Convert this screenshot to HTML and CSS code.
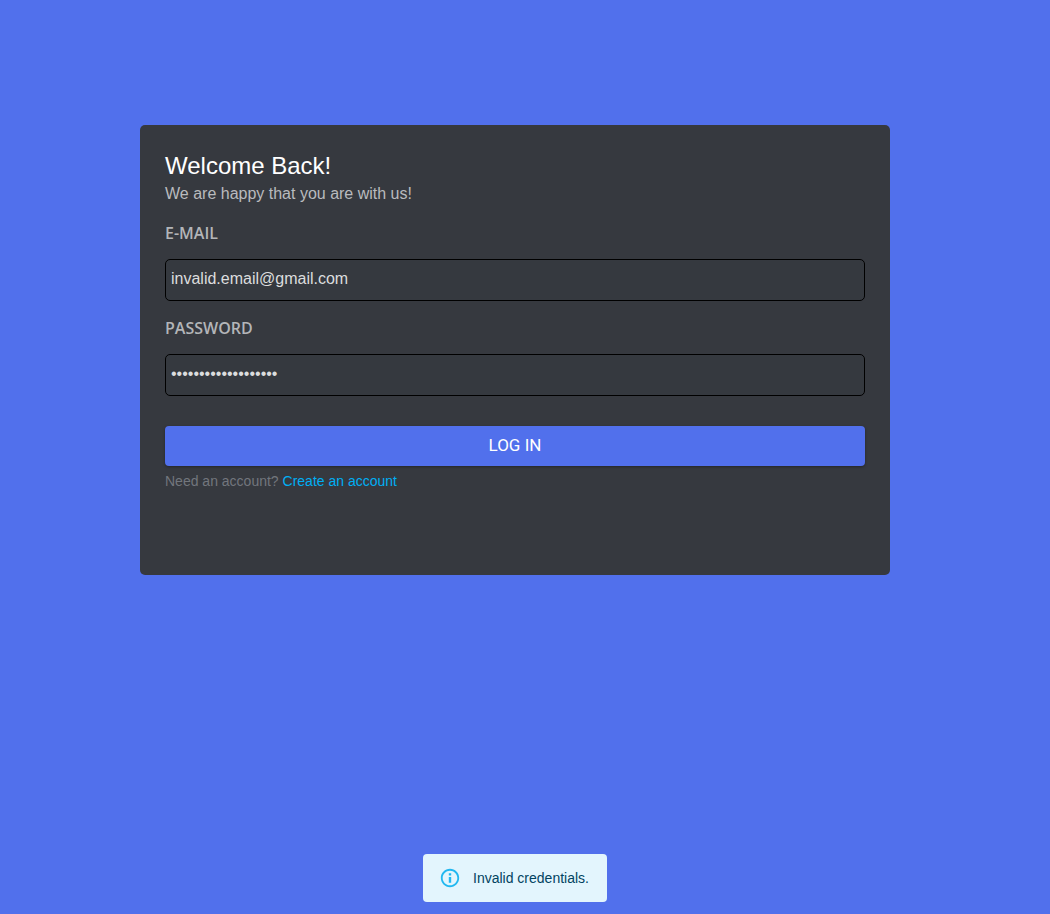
FILE: index.html
```html
<!DOCTYPE html>
<html lang="en">
<head>
<meta charset="utf-8">
<meta name="viewport" content="width=device-width, initial-scale=1">
<title>Log in</title>
<link rel="stylesheet" href="styles.css">
</head>
<body>
<main class="page">
  <form class="card">
    <h1 class="title">Welcome Back!</h1>
    <p class="subtitle">We are happy that you are with us!</p>
    <label class="label" for="email">E-MAIL</label>
    <input class="field" id="email" type="email" value="invalid.email@gmail.com">
    <label class="label" for="password">PASSWORD</label>
    <input class="field" id="password" type="password" value="invalidpassword1234">
    <button class="submit" type="button">LOG IN</button>
    <p class="signup">Need an account? <a class="link" href="#">Create an account</a></p>
  </form>
</main>
<div class="snackbar">
  <div class="toast" role="alert">
    <svg class="toast-icon" viewBox="0 0 24 24" aria-hidden="true"><path d="M10.700 6.800h2.600v2.400h-2.600zM10.700 10.800h2.600v6.400h-2.600zM12 2C6.480 2 2 6.480 2 12s4.480 10 10 10 10-4.480 10-10S17.520 2 12 2zm0 18c-4.410 0-8-3.590-8-8s3.590-8 8-8 8 3.590 8 8-3.590 8-8 8z"/></svg>
    <span>Invalid credentials.</span>
  </div>
</div>
</body>
</html>
```
FILE: styles.css
```css
* {
  box-sizing: border-box;
}

body {
  margin: 0;
  min-height: 100vh;
  padding-right: 20px;
  display: flex;
  flex-direction: column;
  background: #5170ec;
  font-family: "Liberation Sans", Arial, sans-serif;
}

.page {
  flex: 1;
  padding: 125px 20px 20px;
}

.card {
  display: flex;
  flex-direction: column;
  max-width: 750px;
  min-height: 450px;
  margin: 0 auto;
  padding: 25px;
  border-radius: 5px;
  background: #36393f;
}

.title {
  margin: 0;
  font-size: 24px;
  font-weight: 400;
  line-height: 32px;
  color: #fff;
}

.subtitle {
  margin: 0 0 15px;
  font-size: 16px;
  line-height: 24px;
  color: #b9bbbe;
}

.label {
  margin-bottom: 14px;
  font-family: "Open Sans", "Noto Sans", sans-serif;
  font-size: 16px;
  font-weight: 600;
  line-height: 24px;
  color: #b3b5b8;
}

.field {
  width: 100%;
  height: 42px;
  margin: 0 0 15px;
  padding: 0 5px 2px;
  border: 1px solid #000;
  border-radius: 5px;
  background: #35393f;
  color: #dcddde;
  font-family: inherit;
  font-size: 16px;
}

.submit {
  height: 40px;
  margin-top: 15px;
  padding: 0 8px 2px;
  border: 0;
  border-radius: 4px;
  background: #5170ec;
  box-shadow: 0 1px 3px rgba(0, 0, 0, 0.35);
  color: #fff;
  font-family: Roboto, sans-serif;
  font-size: 17px;
  cursor: pointer;
}

.signup {
  margin: 5px 0 0;
  font-size: 14px;
  line-height: 20px;
  color: #72767d;
}

.link {
  color: #00aff4;
  text-decoration: none;
}

.snackbar {
  display: flex;
  justify-content: center;
  padding-bottom: 12px;
}

.toast {
  display: flex;
  align-items: center;
  gap: 12px;
  padding: 13px 18px 13px 16px;
  border-radius: 4px;
  background: #e3f5fd;
  color: #014361;
  font-size: 14px;
  line-height: 20px;
}

.toast-icon {
  width: 22px;
  height: 22px;
  fill: #22b8f0;
}
```
